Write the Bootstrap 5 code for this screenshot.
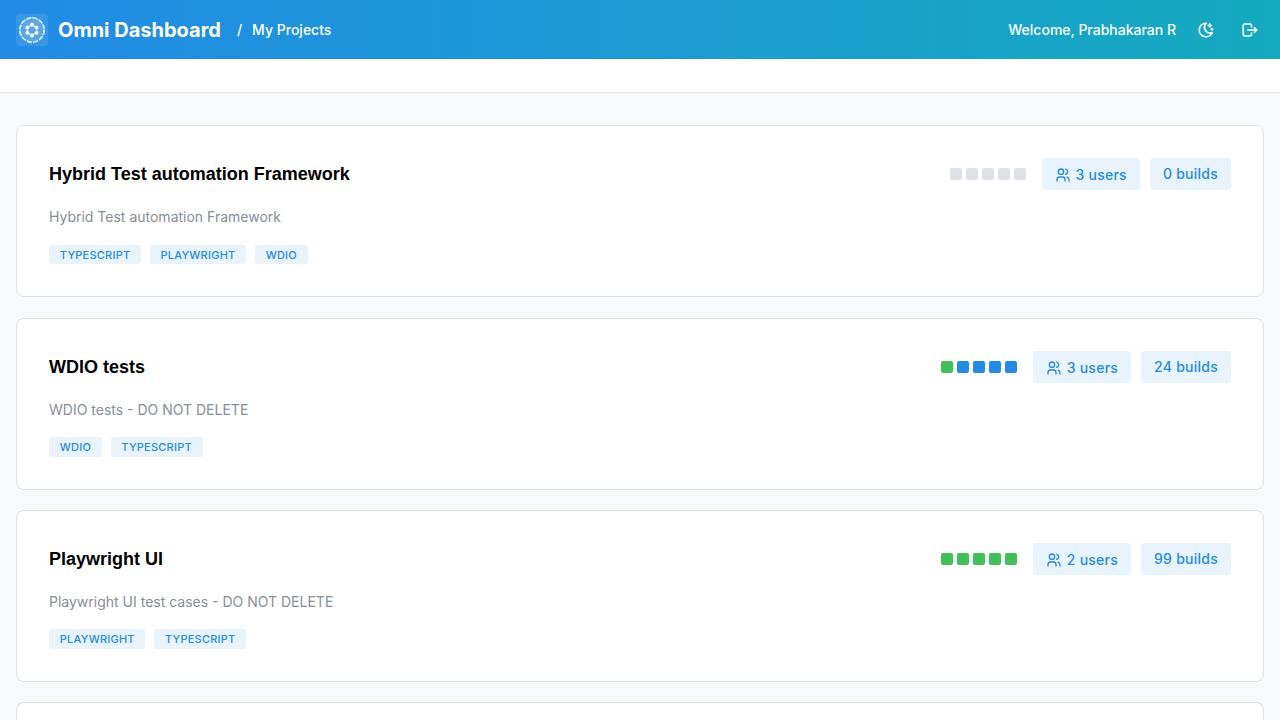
<!DOCTYPE html>
<html lang="en">
<head>
<meta charset="utf-8">
<meta name="viewport" content="width=device-width, initial-scale=1">
<title>Omni Dashboard</title>
<link href="https://cdn.jsdelivr.net/npm/bootstrap@5.3.0/dist/css/bootstrap.min.css" rel="stylesheet">
<style>
body{font-family:Inter,"Liberation Sans",sans-serif;background:#f8f9fa;color:#000;height:720px;overflow:hidden;font-size:14px}
.topbar{height:59px;background:linear-gradient(90deg,#228be6,#15aabf);color:#fff}
.logo{width:32px;height:32px;border-radius:4px;background:rgba(255,255,255,.1)}
.brand{font-size:20px;font-weight:700;line-height:30px;margin-left:10px;color:#fff}
.crumb{font-weight:500;font-size:14px}
.crumb-page{margin-left:10px}
.subbar{height:34px;background:#fff;border-bottom:1px solid #e3e6ea}
.projects{padding-top:32.2px}
.project{height:172px;border:1px solid #dee2e6;border-radius:8px;background:#fff;padding:32px;margin-bottom:20.4px}
.project:last-child{height:17.6px;padding:0;margin:0;border-bottom:0;border-radius:8px 8px 0 0}
.project h2{font:700 18px/32px "Liberation Sans",sans-serif;margin:0}
.desc{color:#868e96;font-size:14px;line-height:22px;margin:16px 0 16.4px}
.tag{height:19.6px;line-height:21px;padding:0 10.7px 0 10.8px;border-radius:3px;background:#e8f3fc;color:#228be6;font-size:11px;font-weight:500;letter-spacing:.23px;text-transform:uppercase;margin-right:8.7px}
.pill{height:32px;padding:0 13px;border-radius:4px;background:#e8f3fc;color:#228be6;font-weight:500;font-size:14px;letter-spacing:.25px}
.dots{gap:4px}
.dot{width:12px;height:12px;border-radius:2px;background:#dee2e6}
.ok{background:#40c057}.run{background:#228be6}
.users{gap:4.6px;margin-right:10px;padding-top:1px}
.users svg{margin-top:1px}
.users span{padding-top:.4px}
.builds{padding-bottom:1px}
svg.line{fill:none;stroke:currentColor;stroke-linecap:round;stroke-linejoin:round}
</style>
</head>
<body>
<svg class="d-none">
<symbol id="users" viewBox="0 0 24 24"><path d="M5 7a4 4 0 1 0 8 0a4 4 0 1 0-8 0M3 21v-2a4 4 0 0 1 4-4h4a4 4 0 0 1 4 4v2M16 3.13a4 4 0 0 1 0 7.75M21 21v-2a4 4 0 0 0-3-3.85"/></symbol>
</svg>
<header class="topbar d-flex align-items-center px-3">
<span class="logo d-flex align-items-center justify-content-center">
<svg width="28" height="28" viewBox="0 0 28 28" fill="none" stroke="#fff"><circle cx="14" cy="14" r="12.2" fill="#fff" fill-opacity=".16" stroke-opacity=".9" stroke-width="1.5" stroke-dasharray="5.2 1.2"/><path d="M14 9l4.6 2.5v5.2l-4.6 2.6-4.6-2.6v-5.2z" stroke-opacity=".75" stroke-width="1.3"/><g fill="#fff" stroke="none"><circle cx="14" cy="8.8" r="2"/><circle cx="18.6" cy="11.4" r="1.9"/><circle cx="18.6" cy="16.8" r="1.9"/><circle cx="14" cy="19.4" r="2"/><circle cx="9.4" cy="16.8" r="1.9"/><circle cx="9.4" cy="11.4" r="1.9"/></g></svg>
</span>
<span class="brand">Omni Dashboard</span>
<nav class="crumb d-flex"><span class="ms-3">/</span><span class="crumb-page">My Projects</span></nav>
<span class="crumb ms-auto me-3">Welcome, Prabhakaran R</span>
<svg class="line ms-1" width="20" height="18" viewBox="0 0 24 24" stroke-width="2.2"><path d="M12 3c.132 0 .263 0 .393 0a7.5 7.5 0 0 0 7.92 12.446a9 9 0 1 1-8.313-12.454zM17 4a2 2 0 0 0 2 2a2 2 0 0 0-2 2a2 2 0 0 0-2-2a2 2 0 0 0 2-2M19 11h2m-1-1v2"/></svg>
<svg class="line ms-4 me-1" width="20" height="18" viewBox="0 0 24 24" stroke-width="2.2"><path d="M14 8v-2a2 2 0 0 0-2-2h-7a2 2 0 0 0-2 2v12a2 2 0 0 0 2 2h7a2 2 0 0 0 2-2v-2M9 12h12l-3-3M18 15l3-3"/></svg>
</header>
<div class="subbar"></div>
<main class="projects px-3">
<article class="project">
<div class="d-flex align-items-center"><h2>Hybrid Test automation Framework</h2>
<div class="d-flex ms-auto me-3 dots"><i class="dot"></i><i class="dot"></i><i class="dot"></i><i class="dot"></i><i class="dot"></i></div>
<span class="pill d-flex align-items-center users"><svg class="line" width="16" height="16" stroke-width="2"><use href="#users"/></svg><span>3 users</span></span><span class="pill d-flex align-items-center builds">0 builds</span></div>
<p class="desc">Hybrid Test automation Framework</p>
<div class="d-flex"><span class="tag">Typescript</span><span class="tag">Playwright</span><span class="tag">WDIO</span></div>
</article>
<article class="project">
<div class="d-flex align-items-center"><h2>WDIO tests</h2>
<div class="d-flex ms-auto me-3 dots"><i class="dot ok"></i><i class="dot run"></i><i class="dot run"></i><i class="dot run"></i><i class="dot run"></i></div>
<span class="pill d-flex align-items-center users"><svg class="line" width="16" height="16" stroke-width="2"><use href="#users"/></svg><span>3 users</span></span><span class="pill d-flex align-items-center builds">24 builds</span></div>
<p class="desc">WDIO tests - DO NOT DELETE</p>
<div class="d-flex"><span class="tag">WDIO</span><span class="tag">Typescript</span></div>
</article>
<article class="project">
<div class="d-flex align-items-center"><h2>Playwright UI</h2>
<div class="d-flex ms-auto me-3 dots"><i class="dot ok"></i><i class="dot ok"></i><i class="dot ok"></i><i class="dot ok"></i><i class="dot ok"></i></div>
<span class="pill d-flex align-items-center users"><svg class="line" width="16" height="16" stroke-width="2"><use href="#users"/></svg><span>2 users</span></span><span class="pill d-flex align-items-center builds">99 builds</span></div>
<p class="desc">Playwright UI test cases - DO NOT DELETE</p>
<div class="d-flex"><span class="tag">Playwright</span><span class="tag">Typescript</span></div>
</article>
<article class="project"></article>
</main>
<script src="https://cdn.jsdelivr.net/npm/bootstrap@5.3.0/dist/js/bootstrap.bundle.min.js"></script>
</body>
</html>
